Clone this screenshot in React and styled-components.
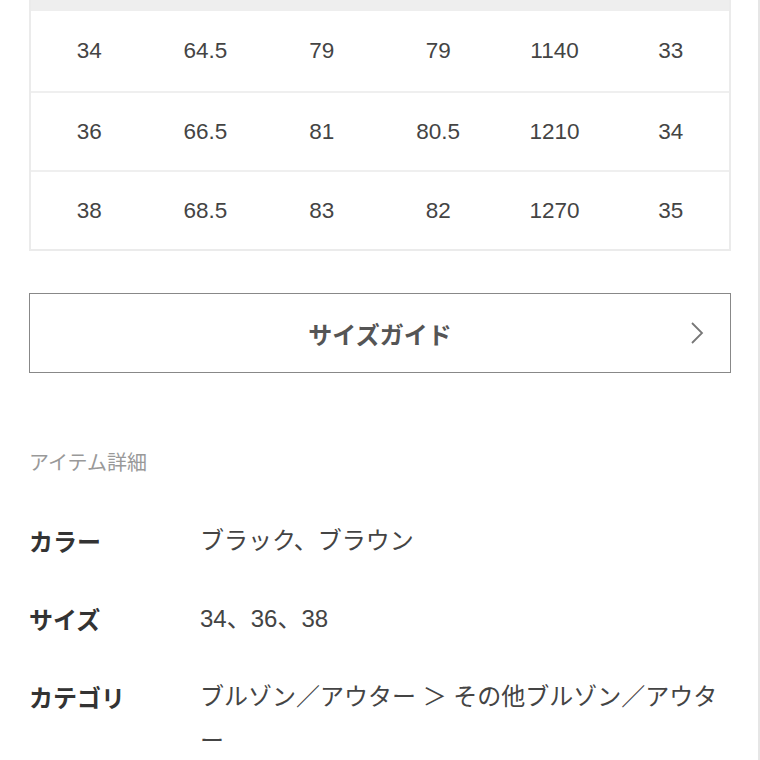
import React from "react";
import styled, { createGlobalStyle } from "styled-components";

const GlobalStyle = createGlobalStyle`
    html, body {
        margin: 0;
        padding: 0;
        background: #fff;
    }
    body {
        font-family: "Liberation Sans", "Noto Sans CJK JP", sans-serif;
        color: #444;
    }
`;

const Page = styled.div`
    width: 760px;
    height: 760px;
    overflow: hidden;
    box-sizing: border-box;
    padding: 0 27px 0 29px;
    border-right: 2px solid #e6e6e6;
`;

const Table = styled.div`
    border: 2px solid #ebebeb;
    border-top: none;
`;

const HeadStrip = styled.div`
    height: 11px;
    background: #eeeeee;
`;

const Row = styled.div`
    box-sizing: border-box;
    display: grid;
    grid-template-columns: repeat(6, 1fr);
    height: ${({ first }) => (first ? "80px" : "79px")};
    align-items: center;
    border-top: ${({ first }) => (first ? "none" : "2px solid #efefef")};
`;

const Cell = styled.div`
    text-align: center;
    font-size: 22.5px;
    color: #444;
`;

const GuideButton = styled.div`
    margin-top: 42px;
    height: 78px;
    border: 1.5px solid #888;
    display: flex;
    align-items: center;
    justify-content: center;
    position: relative;
    font-family: "Noto Sans CJK JP", sans-serif;
    font-size: 24px;
    font-weight: 700;
    color: #555;
`;

const Chevron = styled.svg`
    position: absolute;
    right: 25px;
    top: 50%;
    transform: translateY(-50%);
`;

const SectionTitle = styled.div`
    margin-top: 74px;
    font-family: "Noto Sans CJK JP", sans-serif;
    font-size: 20px;
    line-height: 30px;
    color: #999;
`;

const DetailList = styled.div`
    margin-top: 42px;
    display: flex;
    flex-direction: column;
    gap: 34px;
`;

const DetailRow = styled.div`
    display: flex;
    font-size: 24px;
    line-height: 44px;
`;

const Label = styled.div`
    width: 171px;
    flex-shrink: 0;
    font-family: "Noto Sans CJK JP", sans-serif;
    font-weight: 700;
    color: #333;
`;

const Value = styled.div`
    flex: 1;
    color: #444;
    padding-right: 6px;
`;

const rows = [
    ["34", "64.5", "79", "79", "1140", "33"],
    ["36", "66.5", "81", "80.5", "1210", "34"],
    ["38", "68.5", "83", "82", "1270", "35"],
];

const details = [
    { label: "カラー", value: "ブラック、ブラウン" },
    { label: "サイズ", value: "34、36、38" },
    { label: "カテゴリ", value: "ブルゾン／アウター ＞ その他ブルゾン／アウター" },
];

export default function App() {
    return (
        <>
            <GlobalStyle />
            <Page>
                <Table>
                    <HeadStrip />
                    {rows.map((row, i) => (
                        <Row key={i} first={i === 0}>
                            {row.map((v, j) => (
                                <Cell key={j}>{v}</Cell>
                            ))}
                        </Row>
                    ))}
                </Table>
                <GuideButton>
                    サイズガイド
                    <Chevron width="16" height="24" viewBox="0 0 16 24">
                        <path d="M3 2 L13 12 L3 22" fill="none" stroke="#777" strokeWidth="1.8" />
                    </Chevron>
                </GuideButton>
                <SectionTitle>アイテム詳細</SectionTitle>
                <DetailList>
                    {details.map((d) => (
                        <DetailRow key={d.label}>
                            <Label>{d.label}</Label>
                            <Value>{d.value}</Value>
                        </DetailRow>
                    ))}
                </DetailList>
            </Page>
        </>
    );
}
